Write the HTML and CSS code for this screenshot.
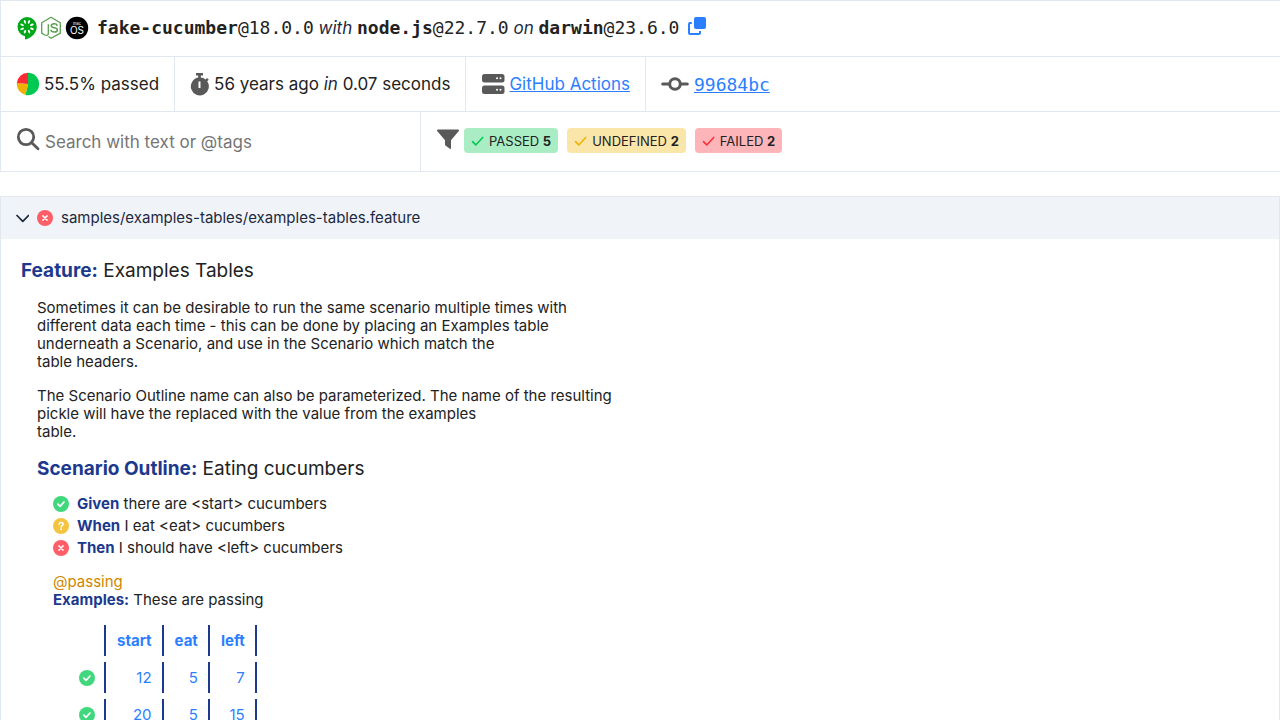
FILE: index.html
```html
<!DOCTYPE html>
<html lang="en">
<head>
<meta charset="utf-8">
<title>Cucumber report</title>
<link rel="stylesheet" href="styles.css">
</head>
<body>
<svg class="sprite" aria-hidden="true">
  <symbol id="passed" viewBox="0 0 16 16"><circle cx="8" cy="8" r="8" fill="#40d77d"/><path d="M4.9 8.2l2.1 2.1 4-4.3" fill="none" stroke="#fff" stroke-width="1.7" stroke-linecap="round" stroke-linejoin="round"/></symbol>
  <symbol id="failed" viewBox="0 0 16 16"><circle cx="8" cy="8" r="8" fill="#fd5e67"/><path d="M6 6l4 4M10 6l-4 4" fill="none" stroke="#fff" stroke-width="1.7" stroke-linecap="round"/></symbol>
  <symbol id="undefined" viewBox="0 0 16 16"><circle cx="8" cy="8" r="8" fill="#f4c440"/><path d="M6.1 6.2c.2-1.2 1-1.6 2-1.6 1.200 0 2 .7 2 1.600 0 1.400-2 1.400-2 2.700" fill="none" stroke="#fff" stroke-width="1.500" stroke-linecap="round"/><circle cx="8.100" cy="11.300" r=".95" fill="#fff"/></symbol>
  <symbol id="check" viewBox="0 0 14 12"><path d="M1.500 6.600l3.300 3.300 6.900-7.500" fill="none" stroke="currentColor" stroke-width="1.500" stroke-linecap="round" stroke-linejoin="round"/></symbol>
</svg>
<header class="summary">
  <div class="row setup">
    <div class="logos">
      <svg width="20" height="24" viewBox="0 0 20 24" role="img" aria-label="Cucumber"><path d="M10 1a9.800 9.800 0 0 0-2 19.300V23.500C14 22.500 19.500 17.500 19.800 11A9.800 9.800 0 0 0 10 1z" fill="#00a818"/><g fill="#fff"><ellipse cx="10" cy="5.500" rx="1" ry="1.900" transform="rotate(22 10 10.800)"/><ellipse cx="10" cy="5.500" rx="1" ry="1.900" transform="rotate(67 10 10.800)"/><ellipse cx="10" cy="5.500" rx="1" ry="1.900" transform="rotate(112 10 10.800)"/><ellipse cx="10" cy="5.500" rx="1" ry="1.900" transform="rotate(157 10 10.800)"/><ellipse cx="10" cy="5.500" rx="1" ry="1.900" transform="rotate(202 10 10.800)"/><ellipse cx="10" cy="5.500" rx="1" ry="1.900" transform="rotate(247 10 10.800)"/><ellipse cx="10" cy="5.500" rx="1" ry="1.900" transform="rotate(292 10 10.800)"/><ellipse cx="10" cy="5.500" rx="1" ry="1.900" transform="rotate(337 10 10.800)"/></g></svg>
      <svg width="20" height="24" viewBox="0 0 20 24" role="img" aria-label="Node.js" fill="none" stroke="#5a9f4e" stroke-width="1.300" stroke-linejoin="round"><path d="M7.500 20.500L10 22.300l9.300-5.200V6.700L10 1.300.7 6.700v10.400l3.200 1.900c1.800.9 3.400.3 3.400-1.500V8.200"/><path stroke-width="1.500" d="M16.200 9.800c-.2-1.400-1.200-2-3-2-1.800 0-2.900.7-2.900 2 0 2.800 6.100 1 6.100 4.100 0 1.400-1.200 2.100-3.100 2.100-2.100 0-3.300-.8-3.400-2.300"/></svg>
      <svg width="24" height="24" viewBox="0 0 24 24" role="img" aria-label="macOS"><circle cx="12" cy="12" r="11.200" fill="#000"/><text class="mac-name" x="12" y="9">mac</text><text class="os-name" x="12" y="18">OS</text></svg>
    </div>
    <p class="versions"><span class="mono"><b>fake-cucumber</b>@18.0.0</span> <i>with</i> <span class="mono"><b>node.js</b>@22.7.0</span> <i>on</i> <span class="mono"><b>darwin</b>@23.6.0</span></p>
    <button class="copy" type="button" aria-label="Copy"><svg width="20" height="20" viewBox="0 0 20 20"><rect x="7" y="1" width="12" height="12" rx="2" fill="#2b7fff"/><path d="M4.800 7H3a1 1 0 0 0-1 1v9a1 1 0 0 0 1 1h9a1 1 0 0 0 1-1v-2" fill="none" stroke="#2b7fff" stroke-width="2"/></svg></button>
  </div>
  <div class="row facts">
    <div class="fact"><svg width="24" height="24" viewBox="0 0 24 24"><path d="M12 12V.8a11.200 11.200 0 1 1-2.600 22.100z" fill="#00c951"/><path d="M12 12L9.400 22.900A11.200 11.200 0 0 1 .8 11z" fill="#f0b100"/><path d="M12 12L.8 11A11.200 11.200 0 0 1 12 .8z" fill="#fb2c36"/></svg><span>55.5% passed</span></div>
    <div class="fact"><svg width="20" height="24" viewBox="0 0 20 24" fill="#595959"><path d="M6 1h7v2.400h-2.200v2.200a9 9 0 0 1 4.700 1.900L17 6l1.800 1.800-1.600 1.500A9 9 0 1 1 8.200 5.600V3.400H6zm2.500 8.500v6.500h2V9.500z" fill-rule="evenodd"/></svg><span>56 years ago <i>in</i> 0.07 seconds</span></div>
    <div class="fact"><svg width="24" height="24" viewBox="0 0 24 24"><rect x="1" y="2" width="22.500" height="8.500" rx="2.500" fill="#595959"/><rect x="1" y="13.500" width="22.500" height="8.500" rx="2.500" fill="#595959"/><g fill="#fff"><circle cx="16" cy="6.300" r="1"/><circle cx="19.500" cy="6.300" r="1"/><circle cx="16" cy="17.700" r="1"/><circle cx="19.500" cy="17.700" r="1"/></g></svg><a href="#ci">GitHub Actions</a></div>
    <div class="fact commit"><svg width="28" height="24" viewBox="0 0 28 24" fill="none" stroke="#595959" stroke-width="3" stroke-linecap="round"><path d="M1.700 12H8m12 0h6.300"/><circle cx="14" cy="12" r="5.300"/></svg><a class="mono" href="#commit">99684bc</a></div>
  </div>
  <div class="row filters">
    <form class="search" role="search"><svg width="24" height="24" viewBox="0 0 24 24" fill="none" stroke="#595959" stroke-width="2.800" stroke-linecap="round"><circle cx="10" cy="10" r="7.700"/><path d="M15.700 15.700L22 21.700"/></svg><input type="text" aria-label="Search" placeholder="Search with text or @tags"></form>
    <div class="statuses">
      <svg width="24" height="24" viewBox="0 0 24 24"><path d="M2 1.500h20q1.800 0 .8 1.500L15 12.300v8q-.3 1-1.200.5l-4-3q-.8-.5-.8-1.500v-4L1.200 3Q.2 1.500 2 1.500z" fill="#595959"/></svg>
      <button class="pill pill-passed" type="button"><svg width="14" height="12"><use href="#check"/></svg><span>PASSED <b>5</b></span></button>
      <button class="pill pill-undefined" type="button"><svg width="14" height="12"><use href="#check"/></svg><span>UNDEFINED <b>2</b></span></button>
      <button class="pill pill-failed" type="button"><svg width="14" height="12"><use href="#check"/></svg><span>FAILED <b>2</b></span></button>
    </div>
  </div>
</header>
<main class="document">
  <button class="document-head" type="button" aria-expanded="true"><svg width="13" height="16" viewBox="0 0 13 16"><path d="M1 5.500l5.800 5.800 5.700-5.800" fill="none" stroke="#1d293d" stroke-width="1.700" stroke-linecap="round" stroke-linejoin="round"/></svg><svg width="16" height="16"><use href="#failed"/></svg><span>samples/examples-tables/examples-tables.feature</span></button>
  <section class="feature">
    <h1 class="title"><b>Feature:</b> Examples Tables</h1>
    <div class="indent">
      <p>Sometimes it can be desirable to run the same scenario multiple times with<br>different data each time - this can be done by placing an Examples table<br>underneath a Scenario, and use in the Scenario which match the<br>table headers.</p>
      <p>The Scenario Outline name can also be parameterized. The name of the resulting<br>pickle will have the replaced with the value from the examples<br>table.</p>
      <h2 class="title"><b>Scenario Outline:</b> Eating cucumbers</h2>
      <div class="indent">
        <ol class="steps">
          <li><svg width="16" height="16"><use href="#passed"/></svg><span><b>Given</b> there are &lt;start&gt; cucumbers</span></li>
          <li><svg width="16" height="16"><use href="#undefined"/></svg><span><b>When</b> I eat &lt;eat&gt; cucumbers</span></li>
          <li><svg width="16" height="16"><use href="#failed"/></svg><span><b>Then</b> I should have &lt;left&gt; cucumbers</span></li>
        </ol>
        <div class="tag">@passing</div>
        <h3 class="examples-title"><b>Examples:</b> These are passing</h3>
        <table class="examples">
          <thead><tr><td></td><th scope="col">start</th><th scope="col">eat</th><th scope="col">left</th></tr></thead>
          <tbody>
            <tr><td><svg width="16" height="16"><use href="#passed"/></svg></td><td>12</td><td>5</td><td>7</td></tr>
            <tr><td><svg width="16" height="16"><use href="#passed"/></svg></td><td>20</td><td>5</td><td>15</td></tr>
          </tbody>
        </table>
      </div>
    </div>
  </section>
</main>
</body>
</html>
```

FILE: styles.css
```css
* { box-sizing: border-box; }
html { overflow: hidden; }
body { margin: 0; background: #fff; color: #222; font: 15px/18px Inter, "Liberation Sans", sans-serif; }
p, h1, h2, h3, ol { margin: 0; padding: 0; font-weight: 400; }
svg { flex: none; display: block; }
button { border: 0; background: none; padding: 0; font: inherit; color: inherit; }
a { color: #2b7fff; text-decoration: underline; }
i { color: #1d293d; }
.sprite { display: none; }
.mono { font-family: "DejaVu Sans Mono", monospace; font-size: 18px; }

.summary { border: solid #e2e8f0; border-width: 1px 0 1px 1px; font-size: 17px; line-height: 23px; }
.row { display: flex; }
.row + .row { border-top: 1px solid #e2e8f0; }
.setup { align-items: center; padding: 15px 16px 16px; gap: 8px; }
.logos { display: flex; gap: 4px; }
.copy { padding-bottom: 4px; }
.mac-name, .os-name { fill: #fff; text-anchor: middle; font-family: Inter, sans-serif; }
.mac-name { font-size: 4px; }
.os-name { font-size: 10px; }
.fact { display: flex; align-items: center; gap: 4px; padding: 15px; }
.fact + .fact { border-left: 1px solid #e2e8f0; }
.fact.commit { gap: 5px; }
.search { display: flex; gap: 5px; width: 419px; padding: 15px; }
.search input { flex: 1; min-width: 0; height: 29px; border: 0; padding: 0; outline: 0; background: none; font: inherit; color: #222; }
.search input::placeholder { color: #757575; opacity: 1; }
.statuses { flex: 1; display: flex; gap: 9px; padding: 16px 15px; border-left: 1px solid #e2e8f0; }
.statuses > svg { margin-right: -5px; }
.pill { display: flex; align-items: center; gap: 4px; height: 25px; padding: 0 7px 0 6px; border-radius: 4px; font-size: 13px; line-height: 16px; }
.pill svg { margin-left: 1px; }
.pill-passed { background: #aaedc4; }
.pill-passed svg { color: #00c951; }
.pill-undefined { background: #fbe6aa; }
.pill-undefined svg { color: #f0b100; }
.pill-failed { background: #feb5b9; }
.pill-failed svg { color: #fb2c36; }

.document { margin-top: 24px; border: 1px solid #e2e8f0; }
.document-head { display: flex; align-items: center; width: 100%; gap: 8px; padding: 12px 15px; background: #f0f4f9; color: #1d293d; text-align: left; }
.feature { padding: 20px; }
.title { font-size: 19px; line-height: 24px; }
.title b, .steps b, .examples-title b { color: #1c398e; }
.indent { padding-left: 16px; }
.indent > p { margin: 16px 0; }
.steps { list-style: none; margin: 12px 0 14px; }
.steps li { display: flex; align-items: center; gap: 8px; height: 22px; }
.tag { color: #d08700; }
.examples-title { font-size: 15px; }
.examples { margin: 10px 0 0 16px; border-spacing: 0 6px; color: #2b7fff; text-align: right; }
.examples td, .examples th { height: 31px; padding: 0 10px 0 11px; }
.examples td:first-child { padding: 0 9px 0 10px; }
.examples td + td, .examples th { border-left: 2px solid #1c398e; }
.examples tr > :last-child { border-right: 2px solid #1c398e; }
```
